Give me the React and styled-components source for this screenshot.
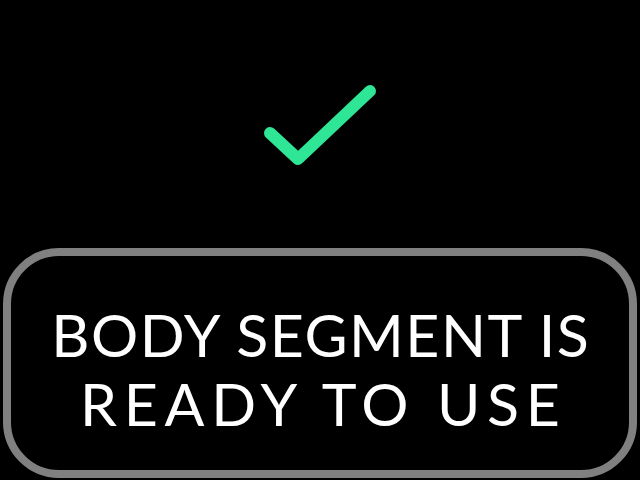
import React from 'react';
import styled, { createGlobalStyle } from 'styled-components';

const GlobalStyle = createGlobalStyle`
  html, body {
    margin: 0;
    padding: 0;
    background: #000;
  }
`;

const Screen = styled.div`
  display: flex;
  flex-direction: column;
  height: 480px;
  width: 640px;
  background: #000;
  box-sizing: border-box;
  padding: 0 3px 2px 3px;
`;

const IconArea = styled.div`
  height: 248px;
  display: flex;
  justify-content: center;
  align-items: flex-start;
  padding-top: 80px;
  box-sizing: border-box;
`;

const MessageBox = styled.div`
  flex: 1;
  border: 8px solid #808080;
  border-radius: 56px;
  display: flex;
  flex-direction: column;
  align-items: center;
  justify-content: center;
  box-sizing: border-box;
  padding-top: 12px;
`;

const Line = styled.div`
  color: #fff;
  font-family: "Lato", "Open Sans", sans-serif;
  font-weight: 400;
  font-size: 59px;
  line-height: 69px;
  white-space: nowrap;
  text-transform: uppercase;
  letter-spacing: ${p => p.spacing}px;
  padding-left: ${p => p.spacing}px;
`;

const CheckIcon = () => (
  <svg width="120" height="90" viewBox="0 0 120 90">
    <polyline
      points="10,53 38,79 110,11"
      fill="none"
      stroke="#2fe596"
      strokeWidth="12"
      strokeLinecap="round"
      strokeLinejoin="round"
    />
  </svg>
);

const App = () => (
  <>
    <GlobalStyle />
    <Screen>
      <IconArea>
        <CheckIcon />
      </IconArea>
      <MessageBox>
        <Line spacing={1.5}>Body segment is</Line>
        <Line spacing={6.7}>Ready to use</Line>
      </MessageBox>
    </Screen>
  </>
);

export default App;
